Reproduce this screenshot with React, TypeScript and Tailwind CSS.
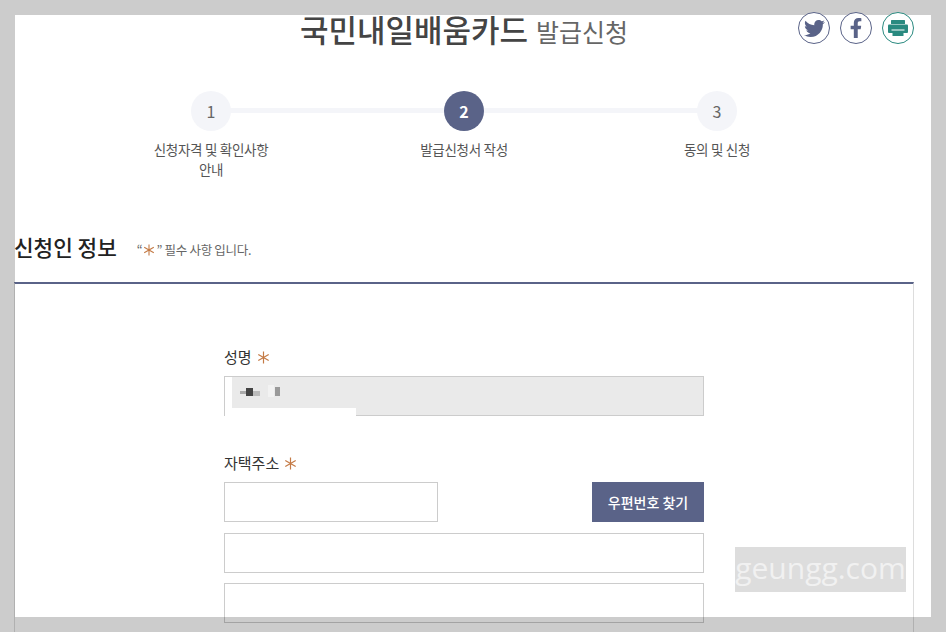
import { FC, ReactNode } from "react";
import { FaFacebookF, FaTwitter } from "react-icons/fa";

const font = { fontFamily: '"Noto Sans CJK KR", "Noto Sans", sans-serif' };

const Star: FC<{ className?: string }> = ({ className }) => (
    <svg viewBox="0 0 12 12" className={className} fill="none" stroke="#c47a45" strokeWidth="1.1">
        <path d="M6 0.5V11.5M1.2 3.2L10.8 8.8M10.8 3.2L1.2 8.8" />
    </svg>
);

const steps: { no: string; label: ReactNode; active?: boolean }[] = [
    { no: "1", label: <>신청자격 및 확인사항<br />안내</> },
    { no: "2", label: "발급신청서 작성", active: true },
    { no: "3", label: "동의 및 신청" },
];

const Field: FC<{ label: string; children: ReactNode }> = ({ label, children }) => (
    <div>
        <div className="flex items-center gap-[5px] h-[20px] text-[15px] text-[#333]">
            {label}
            <Star className="w-[13px] h-[13px]" />
        </div>
        {children}
    </div>
);

const App: FC = () => {
    return (
        <div className="relative w-[946px] h-[632px] overflow-hidden bg-white" style={font}>
            <div className="ml-[14px] w-[900px]">
                <header className="relative h-[91px] text-center">
                    <h1 className="pt-[7px] text-[31px] leading-[44px] font-medium text-[#444]">
                        국민내일배움카드 <span className="ml-[1px] text-[25px] font-normal text-[#666]">발급신청</span>
                    </h1>
                </header>

                <ol className="relative mx-auto grid w-[759px] grid-cols-3">
                    <div className="absolute left-[126px] right-[126px] top-[17px] h-[5px] bg-[#f4f5f9]" />
                    {steps.map((step) => (
                        <li key={step.no} className="relative flex flex-col items-center">
                            <div
                                className={
                                    step.active
                                        ? "flex h-[40px] w-[40px] items-center justify-center rounded-full bg-[#5a6388] text-[16px] font-bold text-white"
                                        : "flex h-[40px] w-[40px] items-center justify-center rounded-full bg-[#f4f5f9] text-[16px] text-[#666]"
                                }
                            >
                                {step.no}
                            </div>
                            <p className="mt-[8px] w-[140px] text-center text-[13.5px] leading-[20px] tracking-[-0.3px] text-[#555]">
                                {step.label}
                            </p>
                        </li>
                    ))}
                </ol>

                <div className="mt-[47px] flex h-[42px] items-center">
                    <h2 className="text-[21.3px] font-medium text-[#222]">신청인 정보</h2>
                    <p className="ml-[20px] mt-[6px] flex items-center text-[12.5px] tracking-[-0.3px] text-[#666]">
                        “<Star className="mx-[1px] h-[12px] w-[12px]" />” 필수 사항 입니다.
                    </p>
                </div>

                <div className="mt-[14px] h-[400px] border-x border-t-2 border-[#ddd] border-t-[#5a6388] px-[209px] pt-[63px]">
                    <Field label="성명">
                        <div className="relative mt-[9px] h-[40px] border border-[#ccc] bg-[#eaeaea]">
                            <div className="absolute left-0 top-0 h-full w-[7px] bg-white" />
                            <div className="absolute bottom-[-1px] left-0 h-[8px] w-[131px] bg-white" />
                            <div className="absolute left-[15px] top-[14px] h-[3px] w-[6px] bg-[#aaa]" />
                            <div className="absolute left-[21px] top-[11px] h-[8px] w-[7px] bg-[#444]" />
                            <div className="absolute left-[28px] top-[14px] h-[5px] w-[7px] bg-[#bbb]" />
                            <div className="absolute left-[43px] top-[8px] h-[12px] w-[6px] bg-[#f2f2f2]" />
                            <div className="absolute left-[50px] top-[10px] h-[9px] w-[5px] bg-[#999]" />
                        </div>
                    </Field>

                    <div className="mt-[37px]">
                        <Field label="자택주소">
                            <div className="mt-[9px] flex justify-between">
                                <input className="h-[40px] w-[214px] border border-[#ccc] bg-white" />
                                <button className="h-[40px] w-[112px] bg-[#5a6388] text-[14px] font-medium text-white">
                                    우편번호 찾기
                                </button>
                            </div>
                            <input className="mt-[11px] block h-[40px] w-full border border-[#ccc] bg-white" />
                            <input className="mt-[10px] block h-[40px] w-full border border-[#ccc] bg-white" />
                        </Field>
                    </div>
                </div>
            </div>

            {/* capture frame lies over the page */}
            <div className="absolute inset-x-0 top-0 h-[15px] bg-black/20" />
            <div className="absolute inset-x-0 bottom-0 h-[15px] bg-black/20" />
            <div className="absolute bottom-[15px] left-0 top-[15px] w-[15px] bg-black/20" />
            <div className="absolute bottom-[15px] right-0 top-[15px] w-[15px] bg-black/20" />

            <div className="absolute left-[798px] top-[12px] flex gap-[10px]">
                <a className="flex h-[32px] w-[32px] items-center justify-center rounded-full border border-[#5a6388] bg-white text-[21px] text-[#5a6388]">
                    <FaTwitter />
                </a>
                <a className="flex h-[32px] w-[32px] items-center justify-center rounded-full border border-[#5a6388] bg-white text-[20px] text-[#5a6388]">
                    <FaFacebookF />
                </a>
                <a className="flex h-[32px] w-[32px] items-center justify-center rounded-full border border-[#2a8a80] bg-white">
                    <svg viewBox="0 0 20 16" className="h-[16px] w-[20px]" fill="#2a8a80">
                        <rect x="3" y="0" width="14" height="4" rx="0.5" />
                        <rect x="0" y="4.5" width="20" height="8.5" rx="1" />
                        <rect x="3.5" y="9.5" width="13" height="1" fill="#fff" />
                        <rect x="4.5" y="11" width="11" height="5" />
                    </svg>
                </a>
            </div>

            <div
                className="absolute left-[735px] top-[547px] flex h-[45px] w-[171px] items-center justify-center bg-[#dddddd] pb-[5px] text-[30px] text-[#f1f1f1]"
                style={{ fontFamily: '"Open Sans", sans-serif' }}
            >
                geungg.com
            </div>
        </div>
    );
};

export default App;
